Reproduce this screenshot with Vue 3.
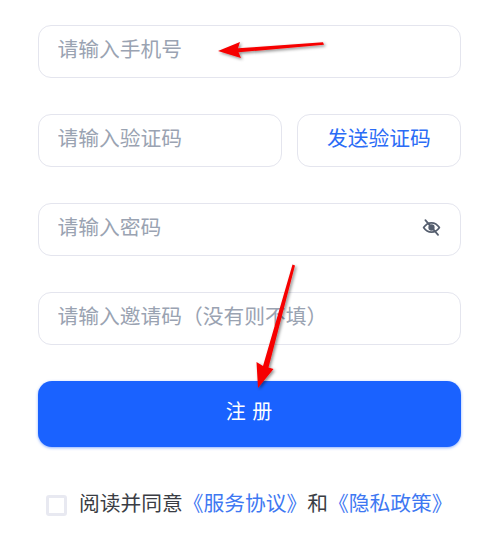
<script setup>
const agreeFont = '阅读并同意'
</script>

<template>
  <div class="page">
    <div class="form">
      <div class="field"><input class="input" placeholder="请输入手机号" /></div>
      <div class="row">
        <div class="field grow"><input class="input" placeholder="请输入验证码" /></div>
        <button class="send" type="button">发送验证码</button>
      </div>
      <div class="field">
        <input class="input" placeholder="请输入密码" />
        <svg class="eye" viewBox="0 0 24 24" fill="none" stroke="#555e6e" stroke-width="2" stroke-linecap="round" stroke-linejoin="round">
          <path d="M3 12c2.4-3.6 5.4-5.4 9-5.4s6.600 1.800 9 5.400c-2.400 3.600-5.400 5.400-9 5.400s-6.600-1.800-9-5.400z" />
          <circle cx="12" cy="12" r="2.600" fill="#555e6e" />
          <path d="M5 3.500l14.500 17" />
        </svg>
      </div>
      <div class="field"><input class="input" placeholder="请输入邀请码（没有则不填）" /></div>
      <button class="submit" type="button">注 册</button>
      <div class="agree">
        <span class="check"></span>
        <span class="text">{{ agreeFont }}<a class="link">《服务协议》</a>和<a class="link">《隐私政策》</a></span>
      </div>
    </div>
    <svg class="arrows" viewBox="0 0 486 539">
      <defs>
        <filter id="sh" x="-20%" y="-20%" width="140%" height="140%">
          <feDropShadow dx="1.500" dy="1.500" stdDeviation="1.500" flood-color="#000" flood-opacity="0.45" />
        </filter>
      </defs>
      <g fill="#f60000" filter="url(#sh)">
        <polygon points="218,51 240,42 238,48.300 323,42.300 324,44.800 238.500,52.300 241,58" />
        <polygon points="258,388 256.500,362 263,366 292.500,264.500 295,265.500 268.500,367.500 273.500,369" />
      </g>
    </svg>
  </div>
</template>

<style scoped>
.page {
  position: relative;
  width: 486px;
  height: 539px;
  overflow: hidden;
  background: #fff;
  font-family: "Noto Sans CJK SC", "Noto Sans", sans-serif;
}
.form {
  display: flex;
  flex-direction: column;
  gap: 36px;
  padding: 25px 25px 0 38px;
}
.row {
  display: flex;
  gap: 15.500px;
}
.field {
  position: relative;
}
.grow {
  flex: 0 0 243.500px;
}
.input {
  display: block;
  width: 100%;
  height: 53px;
  box-sizing: border-box;
  border: 1px solid #e4e5ee;
  border-radius: 13px;
  outline: none;
  background: #fff;
  padding: 0 18.500px 8px;
  font: 20.750px "Noto Sans CJK SC", "Noto Sans", sans-serif;
}
.input::placeholder {
  color: #9aa3b2;
  opacity: 1;
}
.send {
  flex: 1;
  height: 53px;
  box-sizing: border-box;
  border: 1px solid #e4e5ee;
  border-radius: 13px;
  background: #fff;
  color: #2b6cf6;
  padding: 0 0 8px;
  font: 20.750px "Noto Sans CJK SC", "Noto Sans", sans-serif;
}
.eye {
  position: absolute;
  right: 19px;
  top: 14px;
  width: 21px;
  height: 21px;
}
.submit {
  height: 66px;
  margin-bottom: 7px;
  border: none;
  border-radius: 14px;
  background: #1a62ff;
  box-shadow: 0 1px 3px rgba(26, 98, 255, 0.5);
  color: #fff;
  padding: 0 0 8px;
  font: 20px "Noto Sans CJK SC", "Noto Sans", sans-serif;
  letter-spacing: 1px;
}
.agree {
  display: flex;
  align-items: center;
  gap: 12px;
  padding-left: 8px;
}
.check {
  width: 21px;
  height: 21px;
  box-sizing: border-box;
  border: 3px solid #e8e9f1;
  border-radius: 3px;
  background: #fff;
}
.text {
  font-size: 20.750px;
  color: #3a3d44;
  white-space: nowrap;
  position: relative;
  top: -3px;
}
.link {
  color: #3e78f2;
}
.arrows {
  position: absolute;
  inset: 0;
  width: 486px;
  height: 539px;
  pointer-events: none;
}
</style>
